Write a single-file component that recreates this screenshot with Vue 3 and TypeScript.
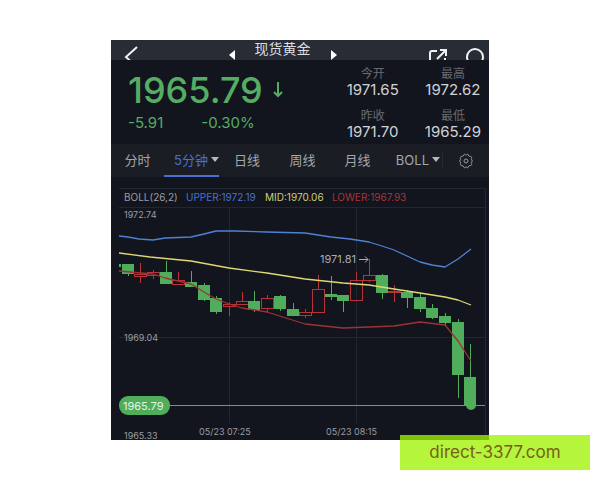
<script setup lang="ts">
import { ref } from 'vue'

interface Candle {
  x: number
  top: number
  bottom: number
  high: number
  low: number
  up?: boolean
}

const prices = [
  { label: '今开', value: '1971.65' },
  { label: '最高', value: '1972.62' },
  { label: '昨收', value: '1971.70' },
  { label: '最低', value: '1965.29' },
]

const periods = ['分时', '5分钟', '日线', '周线', '月线']
const active = ref('5分钟')

const candles: Candle[] = [
  { x: 17, top: 87, bottom: 97, high: 87, low: 99 },
  { x: 29, top: 97, bottom: 99, high: 86, low: 106, up: true },
  { x: 42, top: 95, bottom: 98, high: 93, low: 102, up: true },
  { x: 55, top: 95, bottom: 107, high: 84, low: 107 },
  { x: 67, top: 103, bottom: 107, high: 95, low: 108, up: true },
  { x: 80, top: 105, bottom: 110, high: 94, low: 110 },
  { x: 93, top: 108, bottom: 123, high: 106, low: 124 },
  { x: 105, top: 121, bottom: 135, high: 119, low: 137 },
  { x: 118, top: 127, bottom: 129, high: 125, low: 139, up: true },
  { x: 131, top: 124, bottom: 127, high: 115, low: 128, up: true },
  { x: 143, top: 124, bottom: 133, high: 114, low: 135 },
  { x: 156, top: 121, bottom: 131, high: 118, low: 135, up: true },
  { x: 169, top: 119, bottom: 132, high: 118, low: 134 },
  { x: 182, top: 132, bottom: 139, high: 126, low: 139 },
  { x: 194, top: 135, bottom: 138, high: 132, low: 141, up: true },
  { x: 207, top: 112, bottom: 135, high: 98, low: 135, up: true },
  { x: 220, top: 117, bottom: 120, high: 99, low: 123 },
  { x: 232, top: 118, bottom: 124, high: 118, low: 135 },
  { x: 245, top: 103, bottom: 123, high: 95, low: 124, up: true },
  { x: 258, top: 98, bottom: 103, high: 82, low: 105, up: true },
  { x: 271, top: 98, bottom: 116, high: 97, low: 122 },
  { x: 283, top: 114, bottom: 115, high: 108, low: 125, up: true },
  { x: 296, top: 115, bottom: 121, high: 113, low: 131 },
  { x: 309, top: 120, bottom: 132, high: 116, low: 135 },
  { x: 321, top: 131, bottom: 141, high: 127, low: 142 },
  { x: 334, top: 139, bottom: 146, high: 136, low: 148 },
  { x: 347, top: 145, bottom: 198, high: 142, low: 221 },
  { x: 359, top: 200, bottom: 229, high: 167, low: 229 },
]

const upper =
  '8,59 17,60 28,62 42,63 54,61 80,60 93,57 105,54 124,54 156,55 194,56 220,60 239,62 258,65 271,69 283,73 296,79 309,85 321,88 334,90 347,82 360,72'
const mid =
  '8,76 39,80 80,84 118,91 156,96 194,102 232,106 258,108 283,112 309,116 334,120 347,123 360,128'
const lower =
  '8,94 42,97 54,101 80,107 93,115 105,122 118,127 131,131 156,135 194,147 232,151 258,150 283,149 309,145 334,148 347,164 360,184'
</script>

<template>
  <main class="page">
    <section class="panel">
      <header class="bar">
        <button class="icon back" aria-label="返回">
          <svg width="16" height="22" viewBox="0 0 16 22"><path d="M13 1 L2 11 L13 21" /></svg>
        </button>
        <div class="title">
          <button class="icon arrow" aria-label="上一个">
            <svg width="6" height="10" viewBox="0 0 6 10"><path class="solid" d="M6 0V10L0 5Z" /></svg>
          </button>
          <h1>现货黄金</h1>
          <button class="icon arrow" aria-label="下一个">
            <svg width="6" height="10" viewBox="0 0 6 10"><path class="solid" d="M0 0V10L6 5Z" /></svg>
          </button>
        </div>
        <div class="actions">
          <button class="icon" aria-label="分享">
            <svg width="18" height="18" viewBox="0 0 18 18">
              <path d="M8 2H3Q1 2 1 4V15Q1 17 3 17H14Q16 17 16 15V9M8 10L16 2M11 1H17V7" />
            </svg>
          </button>
          <button class="icon" aria-label="搜索">
            <svg width="20" height="20" viewBox="0 0 20 20">
              <circle cx="10" cy="9" r="8" /><path d="M15 15L19 19" />
            </svg>
          </button>
        </div>
      </header>

      <div class="quote">
        <div class="main">
          <div class="last">
            <strong>1965.79</strong>
            <svg width="10" height="16" viewBox="0 0 10 16"><path d="M5 0V14M1 10L5 14L9 10" /></svg>
          </div>
          <div class="change"><span>-5.91</span><span>-0.30%</span></div>
        </div>
        <dl class="prices">
          <div v-for="p in prices" :key="p.label">
            <dt>{{ p.label }}</dt>
            <dd>{{ p.value }}</dd>
          </div>
        </dl>
      </div>

      <nav class="tabs">
        <button
          v-for="p in periods"
          :key="p"
          class="tab"
          :class="{ active: active === p, menu: p === '5分钟' }"
          @click="active = p"
        >
          {{ p }}<i v-if="p === '5分钟'" class="caret"></i>
        </button>
        <button class="tab boll">BOLL<i class="caret"></i></button>
        <button class="icon gear" aria-label="设置">
          <svg width="16" height="16" viewBox="0 0 16 16">
            <path d="M6 1.500Q6.800 0.800 7.500 1.800Q8 2.300 8.500 1.800Q9.200 0.800 10 1.500L10.900 3.100Q11.300 3.500 12.200 3.300Q13.300 3.300 13.600 4.500Q13.900 5.500 13.300 6.300Q13.100 6.900 14 7.200Q15 8 14 8.800Q13.100 9.100 13.300 9.700Q13.900 10.500 13.600 11.500Q13.300 12.700 12.200 12.700Q11.300 12.500 10.900 12.900L10 14.500Q9.200 15.200 8.500 14.200Q8 13.700 7.500 14.200Q6.800 15.200 6 14.500L5.100 12.900Q4.700 12.500 3.800 12.700Q2.700 12.700 2.400 11.500Q2.100 10.500 2.700 9.700Q2.900 9.100 2 8.800Q1 8 2 7.200Q2.900 6.900 2.700 6.300Q2.100 5.500 2.400 4.500Q2.700 3.300 3.800 3.300Q4.700 3.500 5.100 3.100Z" />
            <circle cx="8" cy="8" r="2" />
          </svg>
        </button>
      </nav>

      <div class="chart">
        <svg viewBox="0 0 378 263" role="img" aria-label="BOLL">
          <path class="grid" d="M8 11.500H374.500V263M8 30.500H374M8 160.500H374M118.500 30V246M245.500 30V246" />
          <rect class="down" x="8" y="87" width="2" height="3" />
          <g v-for="c in candles" :key="c.x" :class="c.up ? 'up' : 'down'">
            <template v-if="c.up">
              <path :d="`M${c.x + 0.5} ${c.high}V${c.top}M${c.x + 0.5} ${c.bottom}V${c.low}`" />
              <rect :x="c.x - 5.5" :y="c.top + 0.5" width="12" :height="c.bottom - c.top" />
            </template>
            <template v-else>
              <path :d="`M${c.x + 0.5} ${c.high}V${c.low}`" />
              <rect :x="c.x - 6" :y="c.top" width="12" :height="c.bottom - c.top" />
            </template>
          </g>
          <polyline class="line upper" :points="upper" />
          <polyline class="line lower" :points="lower" />
          <polyline class="line mid" :points="mid" />
          <path class="now" d="M8 228.500H374" />
          <circle class="dot" cx="360" cy="228" r="5" />
          <rect class="pill" x="8" y="219" width="51" height="19" rx="9" />
          <text class="pilltext" x="12" y="233">1965.79</text>
          <text class="legend" x="13" y="24">BOLL(26,2)</text>
          <text class="legend blue" x="75" y="24">UPPER:1972.19</text>
          <text class="legend yellow" x="154" y="24">MID:1970.06</text>
          <text class="legend red" x="221" y="24">LOWER:1967.93</text>
          <text class="axis" x="13" y="41">1972.74</text>
          <text class="axis" x="13" y="164">1969.04</text>
          <text class="axis" x="13" y="262">1965.33</text>
          <text class="time" x="88" y="258">05/23 07:25</text>
          <text class="time" x="215" y="258">05/23 08:15</text>
          <text class="peak" x="209" y="86">1971.81</text>
          <path class="pointer" d="M248 82.500H257M254 79.500L257 82.500L254 85.500" />
        </svg>
      </div>
    </section>
    <a class="banner" href="#">direct-3377.com</a>
  </main>
</template>

<style>
body {
  margin: 0;
  background: #fff;
}
</style>

<style scoped>
.page {
  position: relative;
  box-sizing: border-box;
  padding: 40px 111px;
  font-family: Inter, "Noto Sans CJK SC", sans-serif;
}
.panel {
  background: #12151d;
  color: #c6c9cf;
}
button {
  padding: 0;
  border: 0;
  background: none;
  color: inherit;
  font: inherit;
}
svg {
  display: block;
}
.bar {
  display: flex;
  justify-content: space-between;
  align-items: flex-start;
  height: 20px;
  padding: 0 4px 0 13px;
  overflow: hidden;
  background: #272c35;
}
.icon svg {
  fill: none;
  stroke: #f0f1f3;
  stroke-width: 2;
}
.icon .solid {
  fill: #fff;
  stroke: none;
}
.back {
  padding-top: 6px;
}
.title {
  display: flex;
  gap: 20px;
  margin-right: 4px;
}
.arrow {
  padding-top: 10px;
}
h1 {
  margin: 0;
  color: #dcdee3;
  font-size: 14px;
  font-weight: 400;
  line-height: 17px;
}
.actions {
  display: flex;
  gap: 18px;
  padding-top: 8px;
}
.quote {
  display: flex;
  justify-content: space-between;
  height: 84px;
  padding: 0 8px 0 17px;
}
.main {
  color: #55ac62;
}
.last {
  display: flex;
  align-items: center;
  gap: 10px;
  padding-top: 9px;
}
.last strong {
  font-size: 36px;
  font-weight: 500;
  line-height: 42px;
}
.last svg {
  fill: none;
  stroke: #55ac62;
  stroke-width: 2;
}
.change {
  display: flex;
  gap: 38px;
  font-size: 15px;
  line-height: 24px;
}
.prices {
  display: grid;
  grid-template-columns: auto auto;
  gap: 10px 26px;
  align-content: start;
  margin: 0;
  padding-top: 6px;
  text-align: center;
}
.prices dt {
  color: #686c74;
  font-size: 12px;
  line-height: 16px;
}
.prices dd {
  margin: 0;
  color: #d0d2d8;
  font-size: 15px;
  line-height: 16px;
}
.tabs {
  display: grid;
  grid-template-columns: 53fr 55fr 56fr 55fr 55fr 57fr 47fr;
  height: 33px;
  background: #1a1d24;
  color: #a3a6ac;
  font-size: 13px;
}
.tab {
  display: flex;
  align-items: center;
  justify-content: center;
  gap: 3px;
  border-bottom: 2px solid transparent;
}
.tab.active {
  border-color: #4c70cf;
  color: #4c70cf;
}
.tab.menu,
.tab.boll {
  justify-content: flex-end;
}
.tab.boll {
  padding-right: 2px;
}
.caret {
  border: 4px solid transparent;
  border-top: 5px solid #b6b8bd;
  border-bottom: 0;
}
.gear {
  display: flex;
  align-items: center;
  justify-content: center;
  margin: 8px 0;
  border-left: 1px solid #262a32;
}
.gear svg {
  stroke: #989ba2;
  stroke-width: 1;
}
.chart svg {
  width: 100%;
  height: auto;
}
.grid {
  fill: none;
  stroke: #22262f;
}
.up {
  fill: none;
  stroke: #b83438;
}
.down path {
  stroke: #50ad5c;
}
.down rect,
rect.down,
.dot,
.pill {
  fill: #50ad5c;
}
.line {
  fill: none;
  stroke-width: 1.3;
  stroke-linejoin: round;
}
.line.upper {
  stroke: #4d82d6;
}
.line.mid {
  stroke: #dfd772;
}
.line.lower {
  stroke: #9c3236;
}
.now {
  stroke: #50ad5c;
}
.axis,
.time {
  fill: #9a9da4;
  font-size: 9px;
}
.legend {
  fill: #9a9da4;
  font-size: 10px;
}
.legend.blue {
  fill: #4c70cf;
}
.legend.yellow {
  fill: #ccd176;
}
.legend.red {
  fill: #a93439;
}
.peak {
  fill: #aaacb2;
  font-size: 11px;
}
.pointer {
  fill: none;
  stroke: #aaacb2;
}
.pilltext {
  fill: #e4f5e6;
  font-size: 11px;
}
.banner {
  position: absolute;
  right: 10px;
  bottom: 10px;
  width: 190px;
  background: rgba(160, 242, 5, 0.78);
  color: #79601a;
  font-family: Inter, sans-serif;
  font-size: 17px;
  line-height: 35px;
  text-align: center;
  text-decoration: none;
}
</style>
